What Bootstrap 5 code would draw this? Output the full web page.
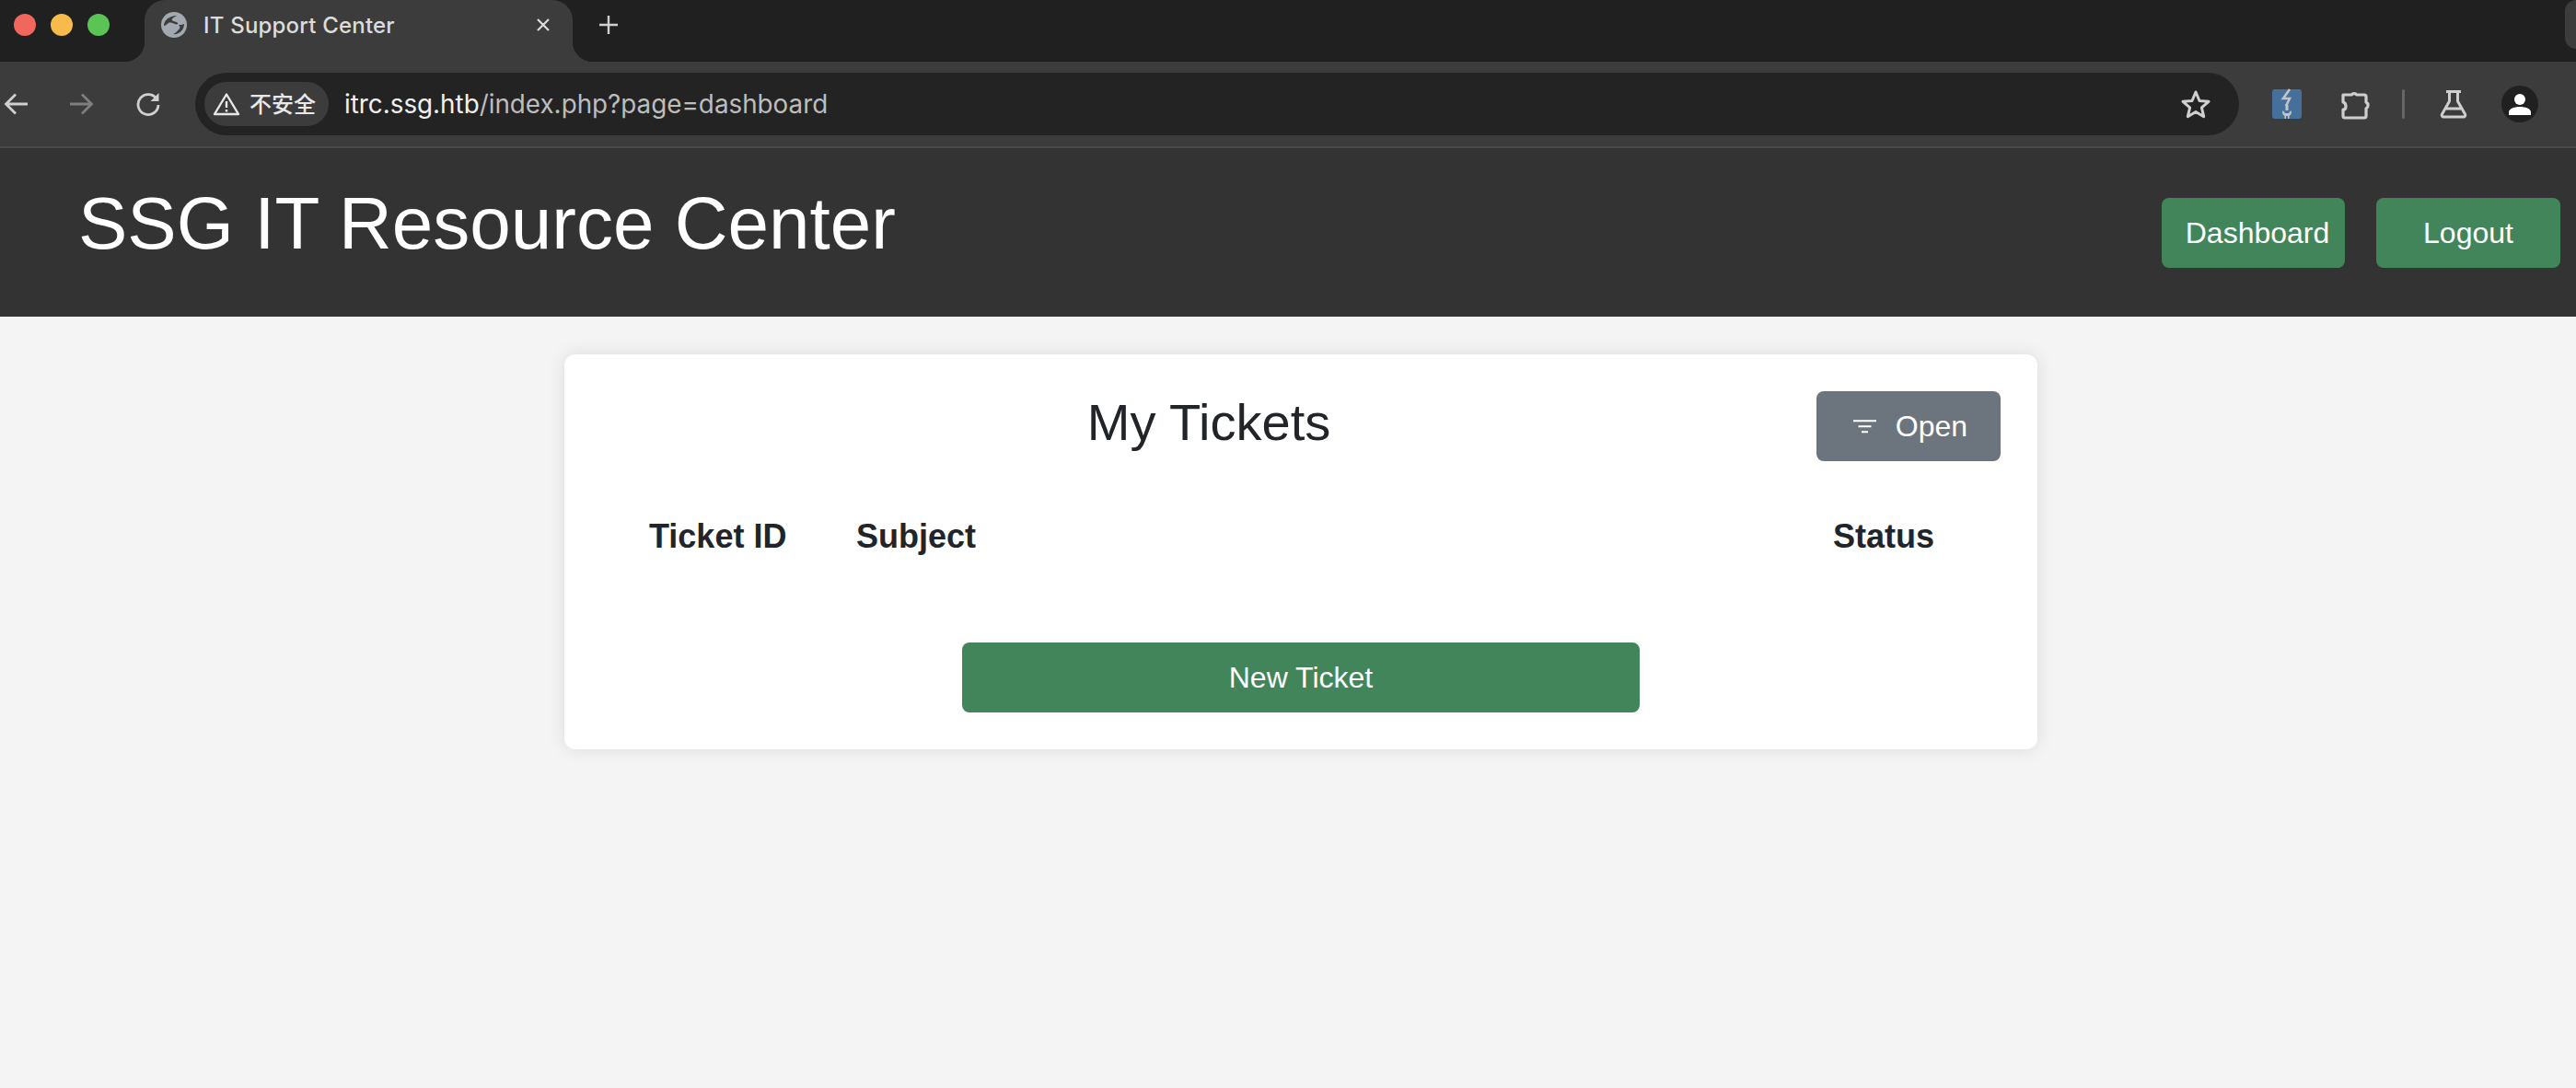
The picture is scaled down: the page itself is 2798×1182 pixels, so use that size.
<!DOCTYPE html>
<html lang="en">
<head>
<meta charset="utf-8">
<title>IT Support Center</title>
<link rel="stylesheet" href="https://cdn.jsdelivr.net/npm/bootstrap@5.3.0/dist/css/bootstrap.min.css">
<style>
html,body{height:100%;overflow:hidden}
body{background:#f4f4f4;font-family:"Liberation Sans",Arial,sans-serif;color:#212529;font-size:32px}
.tabstrip{height:67px;background:#202020;padding-left:15px}
.lights{gap:16px;padding-top:15px;width:142px}
.light{width:24px;height:24px;border-radius:50%}
.tabitem{width:465px;height:67px;background:#3c3c3c;border-radius:22px 22px 0 0;position:relative;padding:0 24px 13px 18px;font:500 24px Inter,"Noto Sans",sans-serif;color:#dcdcdc}
.tabitem::before,.tabitem::after{content:"";position:absolute;bottom:0;width:22px;height:22px}
.tabitem::before{left:-22px;background:radial-gradient(circle at 0 0,transparent 22px,#3c3c3c 22.5px)}
.tabitem::after{right:-22px;background:radial-gradient(circle at 100% 0,transparent 22px,#3c3c3c 22.5px)}
.tabname{margin-left:18px;letter-spacing:.2px}
.newtab{margin-left:28px;margin-top:-13px}
.edgeshape{width:12px;height:53px;background:#3c3c3c;border-radius:16px 0 0 16px}
.toolbar{height:94px;background:#3c3c3c;border-bottom:2px solid #4a4a4a;padding-right:41px}
.navico{width:72px;flex:none}
.navfwd{padding-left:2px}
.navreload{width:64px;padding-left:3px}
.omnibox{width:2220px;height:68px;background:#232323;border-radius:34px;margin-left:4px;padding:0 30px 0 10px}
.chip{height:48px;width:135px;background:#3c3c3c;border-radius:24px;padding-left:9px;font:500 24px Inter,"Noto Sans CJK SC",sans-serif;color:#e8e8e8;gap:10px}
.chip span{margin-top:-3px}
.urltext{margin-left:17px;font:400 27.800px Inter,"Noto Sans",sans-serif;color:#bdbdbd}
.urltext b{font-weight:400;color:#f0f0f0}
.toolicons{margin-left:36px;gap:0}
.toolsep{width:3px;height:32px;background:#666;border-radius:2px;margin:0 38px 0 31px}
.avatar{width:40px;height:40px;border-radius:50%;background:#202020;margin-left:37px}
.sitehead{height:183px;background:#333;padding:0 17px 0 85px}
.sitetitle{font-size:80px;line-height:96px;font-weight:400;color:#fff;margin:0 0 20px}
.headbtns{gap:34px}
.btn.wide{width:200px;height:76px;font-size:32px;line-height:48px;padding:14px 0;border-radius:8px;border:0;color:#fff}
.btn.greenish{background:#42855b}
.btn.greyish{background:#6c757d}
.btn.wide.shifted{width:199px;padding-left:9px}
.pagearea{padding:41px 0 0 613px}
.ticketbox{width:1600px;padding:40px;background:#fff;border:0;border-radius:12px;box-shadow:0 0 20px rgba(0,0,0,.1)}
.boxtitle{font-size:56px;line-height:67px;font-weight:400;margin:0}
.ticket-table{width:auto;margin:55px 0 88px 52px;--bs-table-bg:transparent}
.ticket-table th{border:0;padding:0;font-size:36px;line-height:54px;font-weight:700}
.c1{width:225px}.c2{width:1061px}
.newbtn.btn.wide{width:736px;margin-left:392px;display:block}
.btn.wide.openinner{gap:21px;padding-left:4px}
.tool-second{margin-left:42px}
</style>
</head>
<body>
<div class="d-flex tabstrip">
  <div class="d-flex lights">
    <span class="light" style="background:#f1675e"></span>
    <span class="light" style="background:#f6bb4b"></span>
    <span class="light" style="background:#5ac455"></span>
  </div>
  <div class="d-flex align-items-center tabitem">
    <svg width="28" height="28" viewBox="0 0 28 28"><circle cx="14" cy="14" r="14" fill="#a3a9b1"/><path d="M3 15C3 9 9 4 17 4c-3 2-6 3-5 5 1 2 5 1 6 3 1 1-1 2-3 1-3-1-5-2-7-1-2 1-3 3-5 3z" fill="#3c3c3c"/><path d="M25 13c0 7-6 12-12 11 3-1 5-4 7-6 1-1 0-3-1-4 2 0 4 0 6-1z" fill="#3c3c3c"/></svg>
    <span class="tabname">IT Support Center</span>
    <svg class="ms-auto" width="16" height="16" viewBox="0 0 16 16"><path d="M2 2l12 12M14 2L2 14" stroke="#dcdcdc" stroke-width="2.2"/></svg>
  </div>
  <div class="d-flex align-items-center newtab">
    <svg width="22" height="22" viewBox="0 0 22 22"><path d="M11 1v20M1 11h20" stroke="#d0d0d0" stroke-width="2.4"/></svg>
  </div>
  <div class="edgeshape ms-auto"></div>
</div>

<div class="d-flex align-items-center toolbar">
  <div class="navico d-flex">
    <svg class="ms-1" width="28" height="26" viewBox="0 0 28 26"><path d="M26 13H3M13 2.500L2.500 13 13 23.500" fill="none" stroke="#cfcfcf" stroke-width="2.800"/></svg>
  </div>
  <div class="navico d-flex navfwd">
    <svg width="28" height="26" viewBox="0 0 28 26"><path d="M2 13h23M15 2.500L25.500 13 15 23.500" fill="none" stroke="#7e7e7e" stroke-width="2.800"/></svg>
  </div>
  <div class="navico d-flex navreload">
    <svg width="28" height="28" viewBox="0 0 28 28"><path d="M23.500 9A11 11 0 1 0 25 15" fill="none" stroke="#cfcfcf" stroke-width="2.800"/><path d="M25.500 2v9h-9z" fill="#cfcfcf"/></svg>
  </div>
  <div class="d-flex align-items-center omnibox">
    <div class="d-flex align-items-center chip">
      <svg width="30" height="26" viewBox="0 0 30 26"><path d="M15 2.500L28 24H2z" fill="none" stroke="#e8e8e8" stroke-width="2.400" stroke-linejoin="round"/><path d="M15 10v7M15 19v2.500" stroke="#e8e8e8" stroke-width="2.400"/></svg>
      <span>不安全</span>
    </div>
    <div class="urltext"><b>itrc.ssg.htb</b>/index.php?page=dashboard</div>
    <svg class="ms-auto" width="34" height="32" viewBox="0 0 34 32"><path d="M17 3l4 9.500 10 .8-7.600 6.600 2.300 9.800L17 24.500 8.300 29.700l2.300-9.800L3 13.300l10-.8z" fill="none" stroke="#cfcfcf" stroke-width="3" stroke-linejoin="round"/></svg>
  </div>
  <div class="d-flex align-items-center toolicons">
    <svg width="32" height="34" viewBox="0 0 32 34"><rect y="1" width="32" height="32" rx="3" fill="#45709b"/><path d="M19 1l-7 10h7l-4 8" fill="none" stroke="#c4c4c4" stroke-width="2.600"/><path d="M16 18v6" stroke="#c4c4c4" stroke-width="3"/><path d="M11.500 24a5 5 0 0 0 2 6v3h1.500v-3h2v3h1.500v-3a5 5 0 0 0 2-6l-2 2v1h-5v-1z" fill="#c4c4c4"/></svg>
    <svg class="tool-second" width="36" height="36" viewBox="0 0 36 36"><path d="M3 8h9a4 4 0 0 1 6 0h8a2 2 0 0 1 2 2v6a4 4 0 0 1 0 7v8a2 2 0 0 1-2 2H5a2 2 0 0 1-2-2v-7c4 0 4-7 0-8z" fill="none" stroke="#cfcfcf" stroke-width="3.200" stroke-linejoin="round"/></svg>
    <span class="toolsep"></span>
    <svg width="30" height="32" viewBox="0 0 30 32"><path d="M7 2.500h16M10.500 3v10L2.500 27a2 2 0 0 0 2 3h21a2 2 0 0 0 2-3L19.500 13V3M7 21h16" fill="none" stroke="#cfcfcf" stroke-width="3" stroke-linejoin="round"/></svg>
    <div class="avatar d-flex align-items-center justify-content-center">
      <svg width="24" height="24" viewBox="0 0 24 24"><circle cx="12" cy="7" r="6" fill="#fff"/><path d="M0 24v-3c0-4 6-6 12-6s12 2 12 6v3z" fill="#fff"/></svg>
    </div>
  </div>
</div>

<header class="d-flex align-items-center justify-content-between sitehead">
  <h1 class="sitetitle">SSG IT Resource Center</h1>
  <div class="d-flex headbtns">
    <a class="btn wide greenish shifted" href="#">Dashboard</a>
    <a class="btn wide greenish" href="#">Logout</a>
  </div>
</header>

<main class="pagearea">
  <div class="card ticketbox">
    <div class="d-flex align-items-start">
      <h2 class="boxtitle flex-grow-1 text-center">My Tickets</h2>
      <button class="btn wide greyish d-flex align-items-center justify-content-center openinner" type="button">
        <svg width="25" height="15" viewBox="0 0 25 15"><path d="M0 1.200h25M5.500 7.200h14M9 13.200h7" stroke="#fff" stroke-width="2"/></svg>
        <span>Open</span>
      </button>
    </div>
    <table class="table ticket-table">
      <thead><tr><th class="c1">Ticket ID</th><th class="c2">Subject</th><th>Status</th></tr></thead>
    </table>
    <a class="btn wide greenish newbtn" href="#">New Ticket</a>
  </div>
</main>
<script src="https://cdn.jsdelivr.net/npm/bootstrap@5.3.0/dist/js/bootstrap.bundle.min.js"></script>
</body>
</html>
